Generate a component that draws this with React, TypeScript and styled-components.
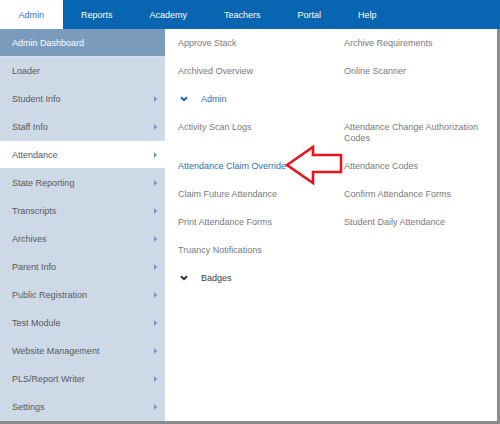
import React from "react";
import styled, { createGlobalStyle } from "styled-components";

const GlobalStyle = createGlobalStyle`
  html, body {
    margin: 0;
    padding: 0;
    background: #ffffff;
  }
  body {
    font-family: "Liberation Sans", Arial, sans-serif;
    font-size: 9px;
  }
`;

const tabs = ["Admin", "Reports", "Academy", "Teachers", "Portal", "Help"];

const sideItems: { label: string; sub?: boolean; active?: boolean }[] = [
  { label: "Loader" },
  { label: "Student Info", sub: true },
  { label: "Staff Info", sub: true },
  { label: "Attendance", sub: true, active: true },
  { label: "State Reporting", sub: true },
  { label: "Transcripts", sub: true },
  { label: "Archives", sub: true },
  { label: "Parent Info", sub: true },
  { label: "Public Registration", sub: true },
  { label: "Test Module", sub: true },
  { label: "Website Management", sub: true },
  { label: "PLS/Report Writer", sub: true },
  { label: "Settings", sub: true },
];

type Entry =
  | { kind: "link"; label: string; current?: boolean }
  | { kind: "group"; label: string; open?: boolean };

const entries: Entry[] = [
  { kind: "link", label: "Approve Stack" },
  { kind: "link", label: "Archive Requirements" },
  { kind: "link", label: "Archived Overview" },
  { kind: "link", label: "Online Scanner" },
  { kind: "group", label: "Admin", open: true },
  { kind: "link", label: "Activity Scan Logs" },
  { kind: "link", label: "Attendance Change Authorization Codes" },
  { kind: "link", label: "Attendance Claim Override", current: true },
  { kind: "link", label: "Attendance Codes" },
  { kind: "link", label: "Claim Future Attendance" },
  { kind: "link", label: "Confirm Attendance Forms" },
  { kind: "link", label: "Print Attendance Forms" },
  { kind: "link", label: "Student Daily Attendance" },
  { kind: "link", label: "Truancy Notifications" },
  { kind: "group", label: "Badges" },
];

function App() {
  return (
    <>
      <GlobalStyle />
      <Page>
        <NavBar>
          {tabs.map((t) => (
            <Tab key={t} $active={t === "Admin"}>
              {t}
            </Tab>
          ))}
        </NavBar>
        <Main>
          <Sidebar>
            <DashboardRow>Admin Dashboard</DashboardRow>
            {sideItems.map((item) => (
              <SideRow key={item.label} $active={item.active}>
                <span>{item.label}</span>
                {item.sub && <Caret />}
              </SideRow>
            ))}
          </Sidebar>
          <Content>
            <LinkGrid>
              {entries.map((e) =>
                e.kind === "group" ? (
                  <GroupHeader key={e.label} $open={e.open}>
                    <svg width="8" height="6" viewBox="0 0 8 6">
                      <polyline
                        points="1,1.2 4,4.2 7,1.2"
                        fill="none"
                        stroke="currentColor"
                        strokeWidth="2"
                      />
                    </svg>
                    <span>{e.label}</span>
                  </GroupHeader>
                ) : (
                  <LinkItem key={e.label} $current={e.current}>
                    {e.label}
                  </LinkItem>
                )
              )}
            </LinkGrid>
            <Pointer width="62" height="45" viewBox="0 0 62 45">
              <polygon
                points="4,22 30,4 30,12 58,12 58,29 30,29 30,40"
                fill="none"
                stroke="#e8141c"
                strokeWidth="2.6"
                strokeLinejoin="miter"
              />
            </Pointer>
          </Content>
          <RightEdge />
        </Main>
        <BottomEdge />
      </Page>
    </>
  );
}

export default App;

const Page = styled.div`
  width: 500px;
  height: 424px;
  display: flex;
  flex-direction: column;
  overflow: hidden;
`;

const NavBar = styled.nav`
  height: 29px;
  flex: none;
  display: flex;
  background: #0865b2;
`;

const Tab = styled.div<{ $active?: boolean }>`
  display: flex;
  align-items: center;
  padding: 0 18.5px;
  color: ${(p) => (p.$active ? "#2f73bd" : "#ffffff")};
  background: ${(p) => (p.$active ? "#ffffff" : "transparent")};
`;

const Main = styled.div`
  flex: 1;
  display: flex;
  min-height: 0;
`;

const Sidebar = styled.aside`
  width: 165px;
  flex: none;
  background: #cdd9e6;
  display: flex;
  flex-direction: column;
`;

const DashboardRow = styled.div`
  height: 28px;
  display: flex;
  align-items: center;
  padding-left: 12px;
  color: #ffffff;
  background: #7b9bbd;
  border-bottom: 1px solid #d6e0ea;
  box-sizing: border-box;
`;

const SideRow = styled.div<{ $active?: boolean }>`
  height: 28px;
  flex: none;
  display: flex;
  align-items: center;
  justify-content: space-between;
  padding: 0 8px 0 12px;
  box-sizing: border-box;
  color: #555a60;
  background: ${(p) => (p.$active ? "#ffffff" : "transparent")};
  border-bottom: 1px solid #d3dee9;
`;

const Caret = styled.i`
  width: 0;
  height: 0;
  border-left: 3px solid #6b93c2;
  border-top: 3px solid transparent;
  border-bottom: 3px solid transparent;
`;

const Content = styled.section`
  flex: 1;
  position: relative;
  background: #ffffff;
  padding: 0 12px 0 13px;
`;

const LinkGrid = styled.div`
  display: grid;
  grid-template-columns: 166px 1fr;
  align-items: start;
`;

const LinkItem = styled.div<{ $current?: boolean }>`
  padding: 8.5px 0;
  line-height: 11px;
  color: ${(p) => (p.$current ? "#2f6fba" : "#777a7e")};
`;

const GroupHeader = styled.div<{ $open?: boolean }>`
  grid-column: 1 / -1;
  display: flex;
  align-items: center;
  gap: 13px;
  padding: 8.5px 0 8.5px 2px;
  line-height: 11px;
  color: ${(p) => (p.$open ? "#2f6fba" : "#3c3f44")};
  svg {
    color: ${(p) => (p.$open ? "#1f5ea8" : "#2b2e33")};
  }
`;

const Pointer = styled.svg`
  position: absolute;
  left: 118px;
  top: 114px;
`;

const RightEdge = styled.div`
  width: 3px;
  flex: none;
  background: #8e8e8e;
`;

const BottomEdge = styled.div`
  height: 3px;
  flex: none;
  background: #8a8a8a;
`;
